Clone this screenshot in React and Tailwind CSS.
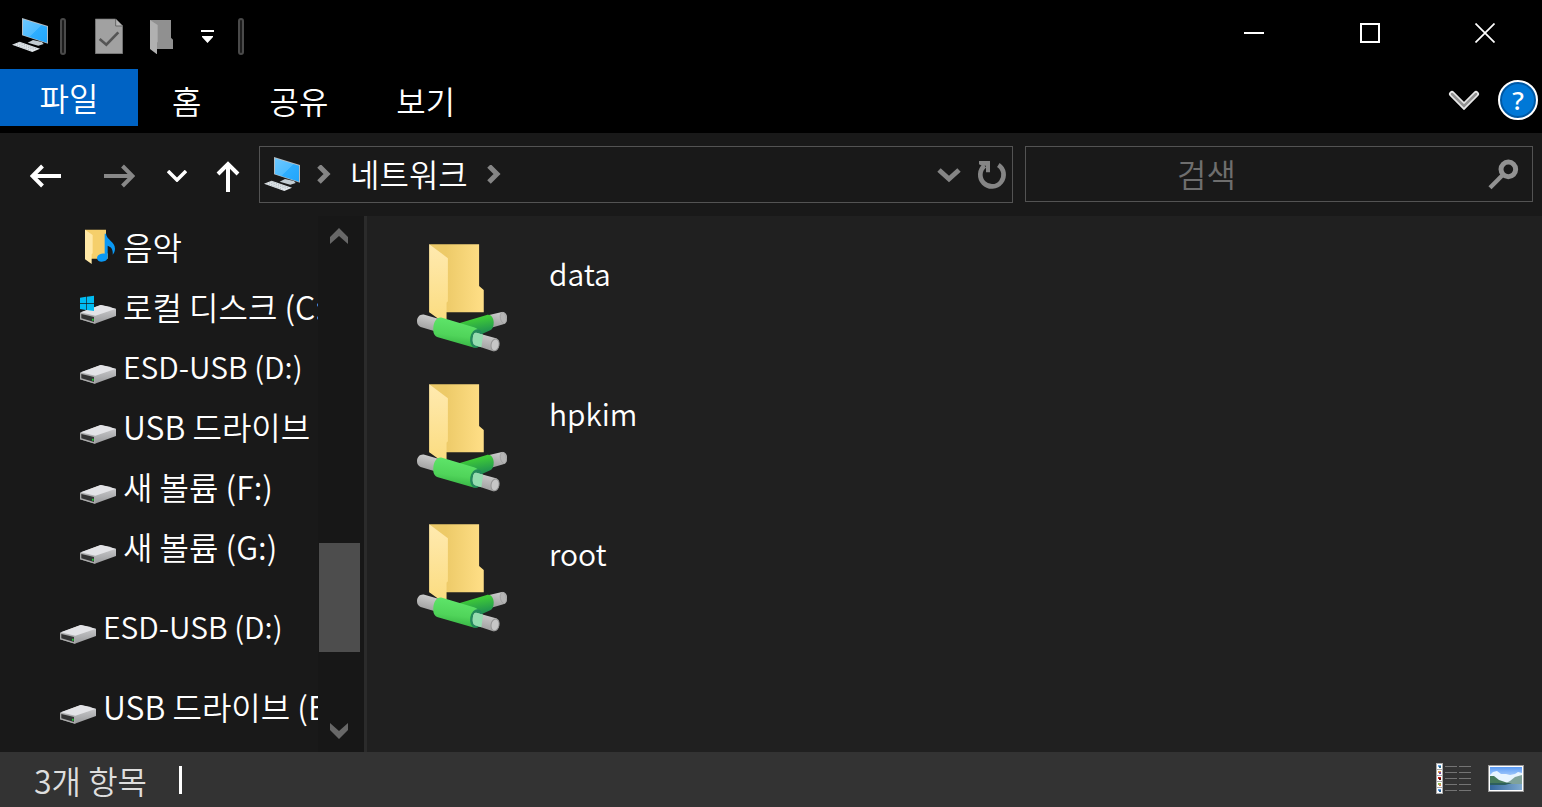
import { useState } from "react";

const drives = [
  { label: "음악", icon: "music" },
  { label: "로컬 디스크 (C:)", icon: "system" },
  { label: "ESD-USB (D:)", icon: "drive", latin: true },
  { label: "USB 드라이브 (E:)", icon: "drive" },
  { label: "새 볼륨 (F:)", icon: "drive" },
  { label: "새 볼륨 (G:)", icon: "drive" },
];

const removable = [
  { label: "ESD-USB (D:)", icon: "drive", latin: true },
  { label: "USB 드라이브 (E:)", icon: "drive" },
];

const shares = ["data", "hpkim", "root"];

const ComputerIcon = () => (
  <svg className="h-9 w-9 shrink-0" viewBox="36 51 108 108" aria-hidden="true">
    <defs>
      <linearGradient id="screen" x1="0" y1="0" x2="1" y2="1">
        <stop offset="0" stopColor="#6cc8ff" />
        <stop offset=".5" stopColor="#4fbcff" />
        <stop offset=".52" stopColor="#2eaeff" />
        <stop offset="1" stopColor="#22a5fb" />
      </linearGradient>
    </defs>
    <path d="M99 117l27 6 5 6-16 5-32-9z" fill="#c3ccd2" />
    <path d="M66 51l78 24v53l-78-25z" fill="#b4bcc1" />
    <path d="M69 55l72 22v48l-72-23z" fill="url(#screen)" />
    <path d="M36 131l23-9 61 21-23 10z" fill="#e1e6ea" />
    <path d="M44 131l48 17M51 128l50 17M58 125l50 18" stroke="#9aa4ab" strokeWidth="2" strokeDasharray="4 3" />
  </svg>
);

const DriveIcon = ({ system }) => (
  <svg className="h-9 w-9 shrink-0" viewBox="0 0 108 108" aria-hidden="true">
    <defs>
      <linearGradient id="driveSide" x1="0" y1="0" x2="0" y2="1">
        <stop offset="0" stopColor="#d2d2d4" />
        <stop offset="1" stopColor="#98999b" />
      </linearGradient>
    </defs>
    <path d="M0 74l62-23 46 11v22l-64 23L0 94z" fill="url(#driveSide)" />
    <path d="M2 73l60-22q24 3 44 12L46 83z" fill="#e3e3e6" />
    <path d="M0 74l46 11v22L0 94z" fill="#aaa" />
    <path d="M4 78l38 9v15L4 91z" fill="#333" />
    <path d="M36 92h5v6h-5z" fill="#25c93a" />
    {system && (
      <path d="M0 29l18-3v19H0zM20 26l22-3v22H20zM0 47h18v19L0 63zM20 47h22v22l-22-3z" fill="#00bcf2" />
    )}
  </svg>
);

const MusicIcon = () => (
  <svg className="h-9 w-9 shrink-0" viewBox="0 0 108 108" aria-hidden="true">
    <path d="M15 5h63v66l5 6v15H37L15 93z" fill="#f5cf6b" />
    <path d="M15 5l23 16v55l-3 3v29L15 94z" fill="#ffe8a6" />
    <path d="M78 17c2 18 27 24 27 45 0 8-3 13-7 18 2-17-6-24-15-27v34c0 9-8 14-18 14-8 0-14-4-14-11 0-9 12-15 23-13V17z" fill="#0a99f5" />
  </svg>
);

const ShareIcon = () => (
  <svg className="h-[108px] w-[90px] shrink-0" viewBox="51 42 271 324" aria-hidden="true">
    <defs>
      <linearGradient id="folderBack" x1="0" y1="0" x2="1" y2="0">
        <stop offset=".3" stopColor="#edca68" />
        <stop offset="1" stopColor="#ffdf87" />
      </linearGradient>
      <linearGradient id="folderFront" x1="0" y1="0" x2="0" y2="1">
        <stop offset="0" stopColor="#ffeab0" />
        <stop offset="1" stopColor="#fbdc80" />
      </linearGradient>
      <linearGradient id="pipe" x1="0.3" y1="0" x2="0" y2="1">
        <stop offset="0" stopColor="#ccc" />
        <stop offset="1" stopColor="#969696" />
      </linearGradient>
      <linearGradient id="greenPipe" x1="0.3" y1="0" x2="0.1" y2="1">
        <stop offset="0" stopColor="#5fe56a" />
        <stop offset=".55" stopColor="#50d45a" />
        <stop offset="1" stopColor="#2faa3d" />
      </linearGradient>
      <linearGradient id="greenBranch" x1="0" y1="0" x2="0.3" y2="1">
        <stop offset=".3" stopColor="#3fcb38" />
        <stop offset="1" stopColor="#1f9150" />
      </linearGradient>
    </defs>
    <path d="M88 42h150v126l14 12v67H88z" fill="url(#folderBack)" />
    <path d="M88 42l56 42v130l-4 4v56l-24-7-28-20z" fill="url(#folderFront)" />
    <path d="M268 255l39-9c9-1 15 7 15 18s-4 16-11 19l-39 11z" fill="url(#pipe)" />
    <ellipse cx="311" cy="264" rx="9" ry="17" fill="#b5b5b5" stroke="#999" strokeWidth="2" transform="rotate(-12 311 264)" />
    <path d="M175 281l86-26c12-3 21 8 21 23 0 13-4 21-12 24l-32 14-35-10z" fill="url(#greenBranch)" />
    <path d="M71 254l49 14-15 36-43-13c-7-2-11-9-11-17 0-12 8-21 20-20z" fill="url(#pipe)" />
    <path d="M124 263l101 30c16 8 27 22 24 38-3 18-14 24-28 22l-107-31c-11-3-15-13-14-26 1-22 11-35 24-33z" fill="url(#greenPipe)" />
    <ellipse cx="230" cy="326" rx="19" ry="28" fill="#22895b" transform="rotate(10 230 326)" />
    <path d="M229 309l60 16c8 3 11 13 9 23-2 11-9 17-18 16l-54-18c-7-3-8-12-7-21 1-10 4-16 10-16z" fill="url(#pipe)" />
    <path d="M229 309l21 6-5 37-19-6c-7-3-8-12-7-21 1-10 4-16 10-16z" fill="#95ddb0" />
    <ellipse cx="286" cy="345" rx="12" ry="18" fill="#c6c6c6" stroke="#949494" strokeWidth="3" transform="rotate(12 286 345)" />
  </svg>
);

const TreeRow = ({ item, nested }) => (
  <li>
    <a
      href="#"
      className={`flex items-center gap-[7px] overflow-hidden whitespace-nowrap ${nested ? "h-[60px] pl-20" : "h-20 pl-[60px]"} ${
        item.latin ? "text-[30px]" : "text-[32px]"
      }`}
    >
      {item.icon === "music" ? <MusicIcon /> : <DriveIcon system={item.icon === "system"} />}
      <span>{item.label}</span>
    </a>
  </li>
);

const TitleBar = () => (
  <header className="flex h-[69px] shrink-0 items-start bg-black">
    <div className="flex h-[72px] items-center pl-3">
      <ComputerIcon />
      <span className="ml-3 h-[37px] w-1.5 rounded-full border-2 border-[#4a4a4a] bg-[#1c1c1c]" />
      <button type="button" aria-label="속성" className="ml-[29px]">
        <svg className="h-9 w-7" viewBox="0 0 84 108">
          <path d="M1 3h61l21 21v83H1z" fill="#a1a1a1" stroke="#777" strokeWidth="2" />
          <path d="M62 3v21h21" fill="#b5b5b5" stroke="#666" strokeWidth="3" />
          <path d="M14 63l20 17 36-37" fill="none" stroke="#555" strokeWidth="8" />
        </svg>
      </button>
      <button type="button" aria-label="새 폴더" className="ml-[27px]">
        <svg className="h-9 w-6" viewBox="450 57 72 108">
          <path d="M450 63h63v53l6 6v28h-52l-17-6z" fill="#909090" />
          <path d="M450 63l23 15v50l-2 3v35l-21-16z" fill="#b0b0b0" />
        </svg>
      </button>
      <button type="button" aria-label="사용자 지정" className="ml-[27px]">
        <svg className="h-[14px] w-[14px]" viewBox="0 0 14 14" fill="#fff">
          <path d="M0 1h13v2H0zM1 7h11v1l-5.500 6L1 8z" />
        </svg>
      </button>
      <span className="ml-[23px] h-[37px] w-1.5 rounded-full border-2 border-[#4a4a4a] bg-[#1c1c1c]" />
    </div>
    <div className="ml-auto flex h-[66px]">
      <button type="button" aria-label="최소화" className="flex w-[116px] items-center justify-center">
        <span className="h-0.5 w-5 bg-white" />
      </button>
      <button type="button" aria-label="최대화" className="flex w-[116px] items-center justify-center">
        <span className="h-5 w-5 border-2 border-white" />
      </button>
      <button type="button" aria-label="닫기" className="flex w-[114px] items-center justify-center">
        <svg className="h-5 w-5" viewBox="0 0 20 20" stroke="#fff" strokeWidth="1.7">
          <path d="M0.5 0.5l19 19M19.5 0.5l-19 19" />
        </svg>
      </button>
    </div>
  </header>
);

const Ribbon = () => (
  <nav className="flex h-16 shrink-0 items-start bg-black">
    <button type="button" className="h-[57px] w-[138px] bg-[#0063c4] pb-0.5">파일</button>
    {["홈", "공유", "보기"].map((tab) => (
      <button key={tab} type="button" className="h-[62px] px-[34px]">
        {tab}
      </button>
    ))}
    <button type="button" aria-label="리본 확장" className="mt-[21px] ml-auto">
      <svg className="h-5 w-8" viewBox="0 0 32 20" fill="none" strokeLinecap="round">
        <path d="M4 4l12 12L28 4" stroke="#e8e8e8" strokeWidth="6" />
        <path d="M4 4l12 12L28 4" stroke="#929292" strokeWidth="2.500" />
      </svg>
    </button>
    <button
      type="button"
      aria-label="도움말"
      className="mt-[11px] mr-1 ml-[18px] flex h-10 w-10 items-center justify-center rounded-full border-2 border-white bg-[#0078d7] font-['Noto_Sans',sans-serif] text-[26px] leading-none font-medium shadow-[inset_0_0_0_2px_#0058a3]"
    >
      ?
    </button>
  </nav>
);

const AddressBar = () => {
  const [query, setQuery] = useState("");

  return (
    <div className="flex h-[83px] shrink-0 items-start bg-[#191919] pt-[13px] pr-[9px]">
      <div className="flex h-[57px] items-center pt-0.5 pl-[30px]">
        <button type="button" aria-label="뒤로">
          <svg className="h-6 w-8" viewBox="0 0 32 24" fill="none" stroke="#fff" strokeWidth="4">
            <path d="M31 12H3M12.5 2L2.500 12l10 10" />
          </svg>
        </button>
        <button type="button" aria-label="앞으로" className="ml-[41px]">
          <svg className="h-6 w-8" viewBox="0 0 32 24" fill="none" stroke="#888" strokeWidth="4">
            <path d="M1 12h28M19.500 2l10 10-10 10" />
          </svg>
        </button>
        <button type="button" aria-label="최근 위치" className="ml-8">
          <svg className="h-3 w-5" viewBox="0 0 20 12" fill="none" stroke="#fff" strokeWidth="3.500">
            <path d="M1 1l9 9 9-9" />
          </svg>
        </button>
        <button type="button" aria-label="위로" className="ml-[29px]">
          <svg className="h-8 w-6" viewBox="0 0 24 32" fill="none" stroke="#fff" strokeWidth="4">
            <path d="M12 32V5M2 14L12 4l10 10" />
          </svg>
        </button>
      </div>
      <div className="ml-[19px] flex h-[57px] flex-1 items-center border border-[#535353] pl-1">
        <ComputerIcon />
        <svg className="ml-[17px] h-5 w-[14px]" viewBox="0 0 14 20" fill="none" stroke="#858585" strokeWidth="5">
          <path d="M2 1l8 8-8 8" />
        </svg>
        <button type="button" className="mx-[19px] pb-1">네트워크</button>
        <svg className="h-5 w-[14px]" viewBox="0 0 14 20" fill="none" stroke="#858585" strokeWidth="5">
          <path d="M2 1l8 8-8 8" />
        </svg>
        <button type="button" aria-label="이전 위치" className="ml-auto">
          <svg className="h-4 w-6" viewBox="0 0 24 16" fill="none" stroke="#858585" strokeWidth="5">
            <path d="M2 3l10 9 10-9" />
          </svg>
        </button>
        <button type="button" aria-label="새로 고침" className="mr-1 ml-[15px]">
          <svg className="h-8 w-8" viewBox="168 42 96 96">
            <path d="M235 60a35 35 0 1 1-41 2" fill="none" stroke="#858585" strokeWidth="14" />
            <path d="M177 48h33v34h-12V62h-12l-9-4z" fill="#858585" />
          </svg>
        </button>
      </div>
      <label className="ml-3 flex h-14 w-[508px] items-center border border-[#535353] pr-3">
        <input
          type="text"
          aria-label="검색"
          placeholder="검색"
          value={query}
          onChange={(e) => setQuery(e.target.value)}
          className="h-full w-full min-w-0 bg-transparent pb-0.5 pl-[151px] outline-none placeholder:text-[#6e6e6e]"
        />
        <svg className="h-8 w-8 shrink-0" viewBox="54 40 96 96" fill="none" stroke="#929292">
          <circle cx="115" cy="74" r="22" strokeWidth="15" />
          <path d="M98 91l-38 38" strokeWidth="13" />
        </svg>
      </label>
    </div>
  );
};

const Sidebar = () => (
  <aside className="flex w-[367px] shrink-0 border-r-[3px] border-[#2b2b2b] bg-[#191919]">
    <div className="min-w-0 flex-1">
      <ul>
        {drives.map((item) => (
          <TreeRow key={item.label} item={item} nested />
        ))}
      </ul>
      <ul className="mt-2.5">
        {removable.map((item) => (
          <TreeRow key={item.label} item={item} />
        ))}
      </ul>
    </div>
    <div className="flex w-[46px] flex-col items-start bg-[#171717] pr-1">
      <button type="button" aria-label="위로 스크롤" className="flex h-10 w-[42px] items-center justify-center">
        <svg className="h-4 w-[18px]" viewBox="0 0 18 16" fill="#686868">
          <path d="M0 9l9-9 9 9v7l-9-8-9 8z" />
        </svg>
      </button>
      <div className="flex w-[42px] flex-1 flex-col pl-px">
        <div className="flex-[287]" />
        <div className="h-[109px] bg-[#4d4d4d]" />
        <div className="flex-[58]" />
      </div>
      <button type="button" aria-label="아래로 스크롤" className="flex h-[42px] w-[42px] items-center justify-center">
        <svg className="h-4 w-[18px]" viewBox="0 0 18 16" fill="#686868">
          <path d="M0 0l9 8 9-8v7l-9 9-9-9z" />
        </svg>
      </button>
    </div>
  </aside>
);

const thumbs = [
  ["#6fa8e8", "#2f6a86"],
  ["#e0a24a", "#7b4d9c"],
  ["#c91e16", "#5a120c"],
  ["#8cc152", "#d98a5a"],
  ["#5c9be6", "#2b6091"],
];

const DetailsIcon = () => (
  <svg className="h-8 w-9" viewBox="0 0 36 32">
    <path d="M0 0h7v31H0z" fill="#aaa" />
    {thumbs.map(([top, bottom], i) => (
      <g key={i}>
        <rect x="1" y={1 + i * 6} width="5" height="5" fill="#fff" />
        <rect x="2" y={2 + i * 6} width="3" height="2" fill={top} />
        <rect x="3" y={3 + i * 6} width="2" height="2" fill={bottom} />
        <path d={`M9 ${3.5 + i * 6}h12M23 ${3.5 + i * 6}h12`} stroke="#747474" />
      </g>
    ))}
  </svg>
);

const PictureIcon = () => (
  <svg className="h-[27px] w-9" viewBox="0 0 36 27">
    <defs>
      <linearGradient id="sky" x1="0" y1="0" x2="0" y2="1">
        <stop offset="0" stopColor="#5b9bf5" />
        <stop offset=".6" stopColor="#cfe6ff" />
      </linearGradient>
      <linearGradient id="lake" x1="0" y1="0" x2="1" y2="0">
        <stop offset="0" stopColor="#34679c" />
        <stop offset="1" stopColor="#7fa9cf" />
      </linearGradient>
    </defs>
    <path d="M0 0h36v27H0z" fill="#999" />
    <path d="M1 1h34v25H1z" fill="#fff" />
    <path d="M2 2h32v23H2z" fill="url(#sky)" />
    <path d="M2 10l3-3 4-1 4 3 5 0 4 1 5-1 3-2 4 1v11H2z" fill="#e8f4ff" />
    <path d="M16 19l6-3 5-4 7-2v9z" fill="#7fa29a" />
    <path d="M2 11l4 0 5 4 6 2 6 2H2z" fill="#477a5b" />
    <path d="M2 19h32v6H2z" fill="url(#lake)" />
    <path d="M2 18h22l-7 2H2z" fill="#2d5f5c" />
  </svg>
);

const App = () => {
  return (
    <div className="flex min-h-screen flex-col bg-[#202020] font-['Noto_Sans_CJK_KR',sans-serif] text-[32px] leading-10 font-[350] text-white">
      <TitleBar />
      <Ribbon />
      <AddressBar />
      <div className="flex flex-1">
        <Sidebar />
        <main className="flex-1">
          <ul className="flex flex-col gap-8 pt-7 pl-[50px]">
            {shares.map((name) => (
              <li key={name}>
                <a href="#" className="flex items-start gap-[42px] text-[30px] leading-[58px]">
                  <ShareIcon />
                  <span>{name}</span>
                </a>
              </li>
            ))}
          </ul>
        </main>
      </div>
      <footer className="flex h-[55px] shrink-0 items-center bg-[#333] pr-[18px] pl-[34px] text-[#dedede]">
        <span>3개 항목</span>
        <span className="ml-8 h-7 w-[3px] bg-white" />
        <div className="ml-auto flex items-center gap-4 pb-0.5">
          <button type="button" aria-label="자세히">
            <DetailsIcon />
          </button>
          <button type="button" aria-label="큰 아이콘">
            <PictureIcon />
          </button>
        </div>
      </footer>
    </div>
  );
};

export default App;
